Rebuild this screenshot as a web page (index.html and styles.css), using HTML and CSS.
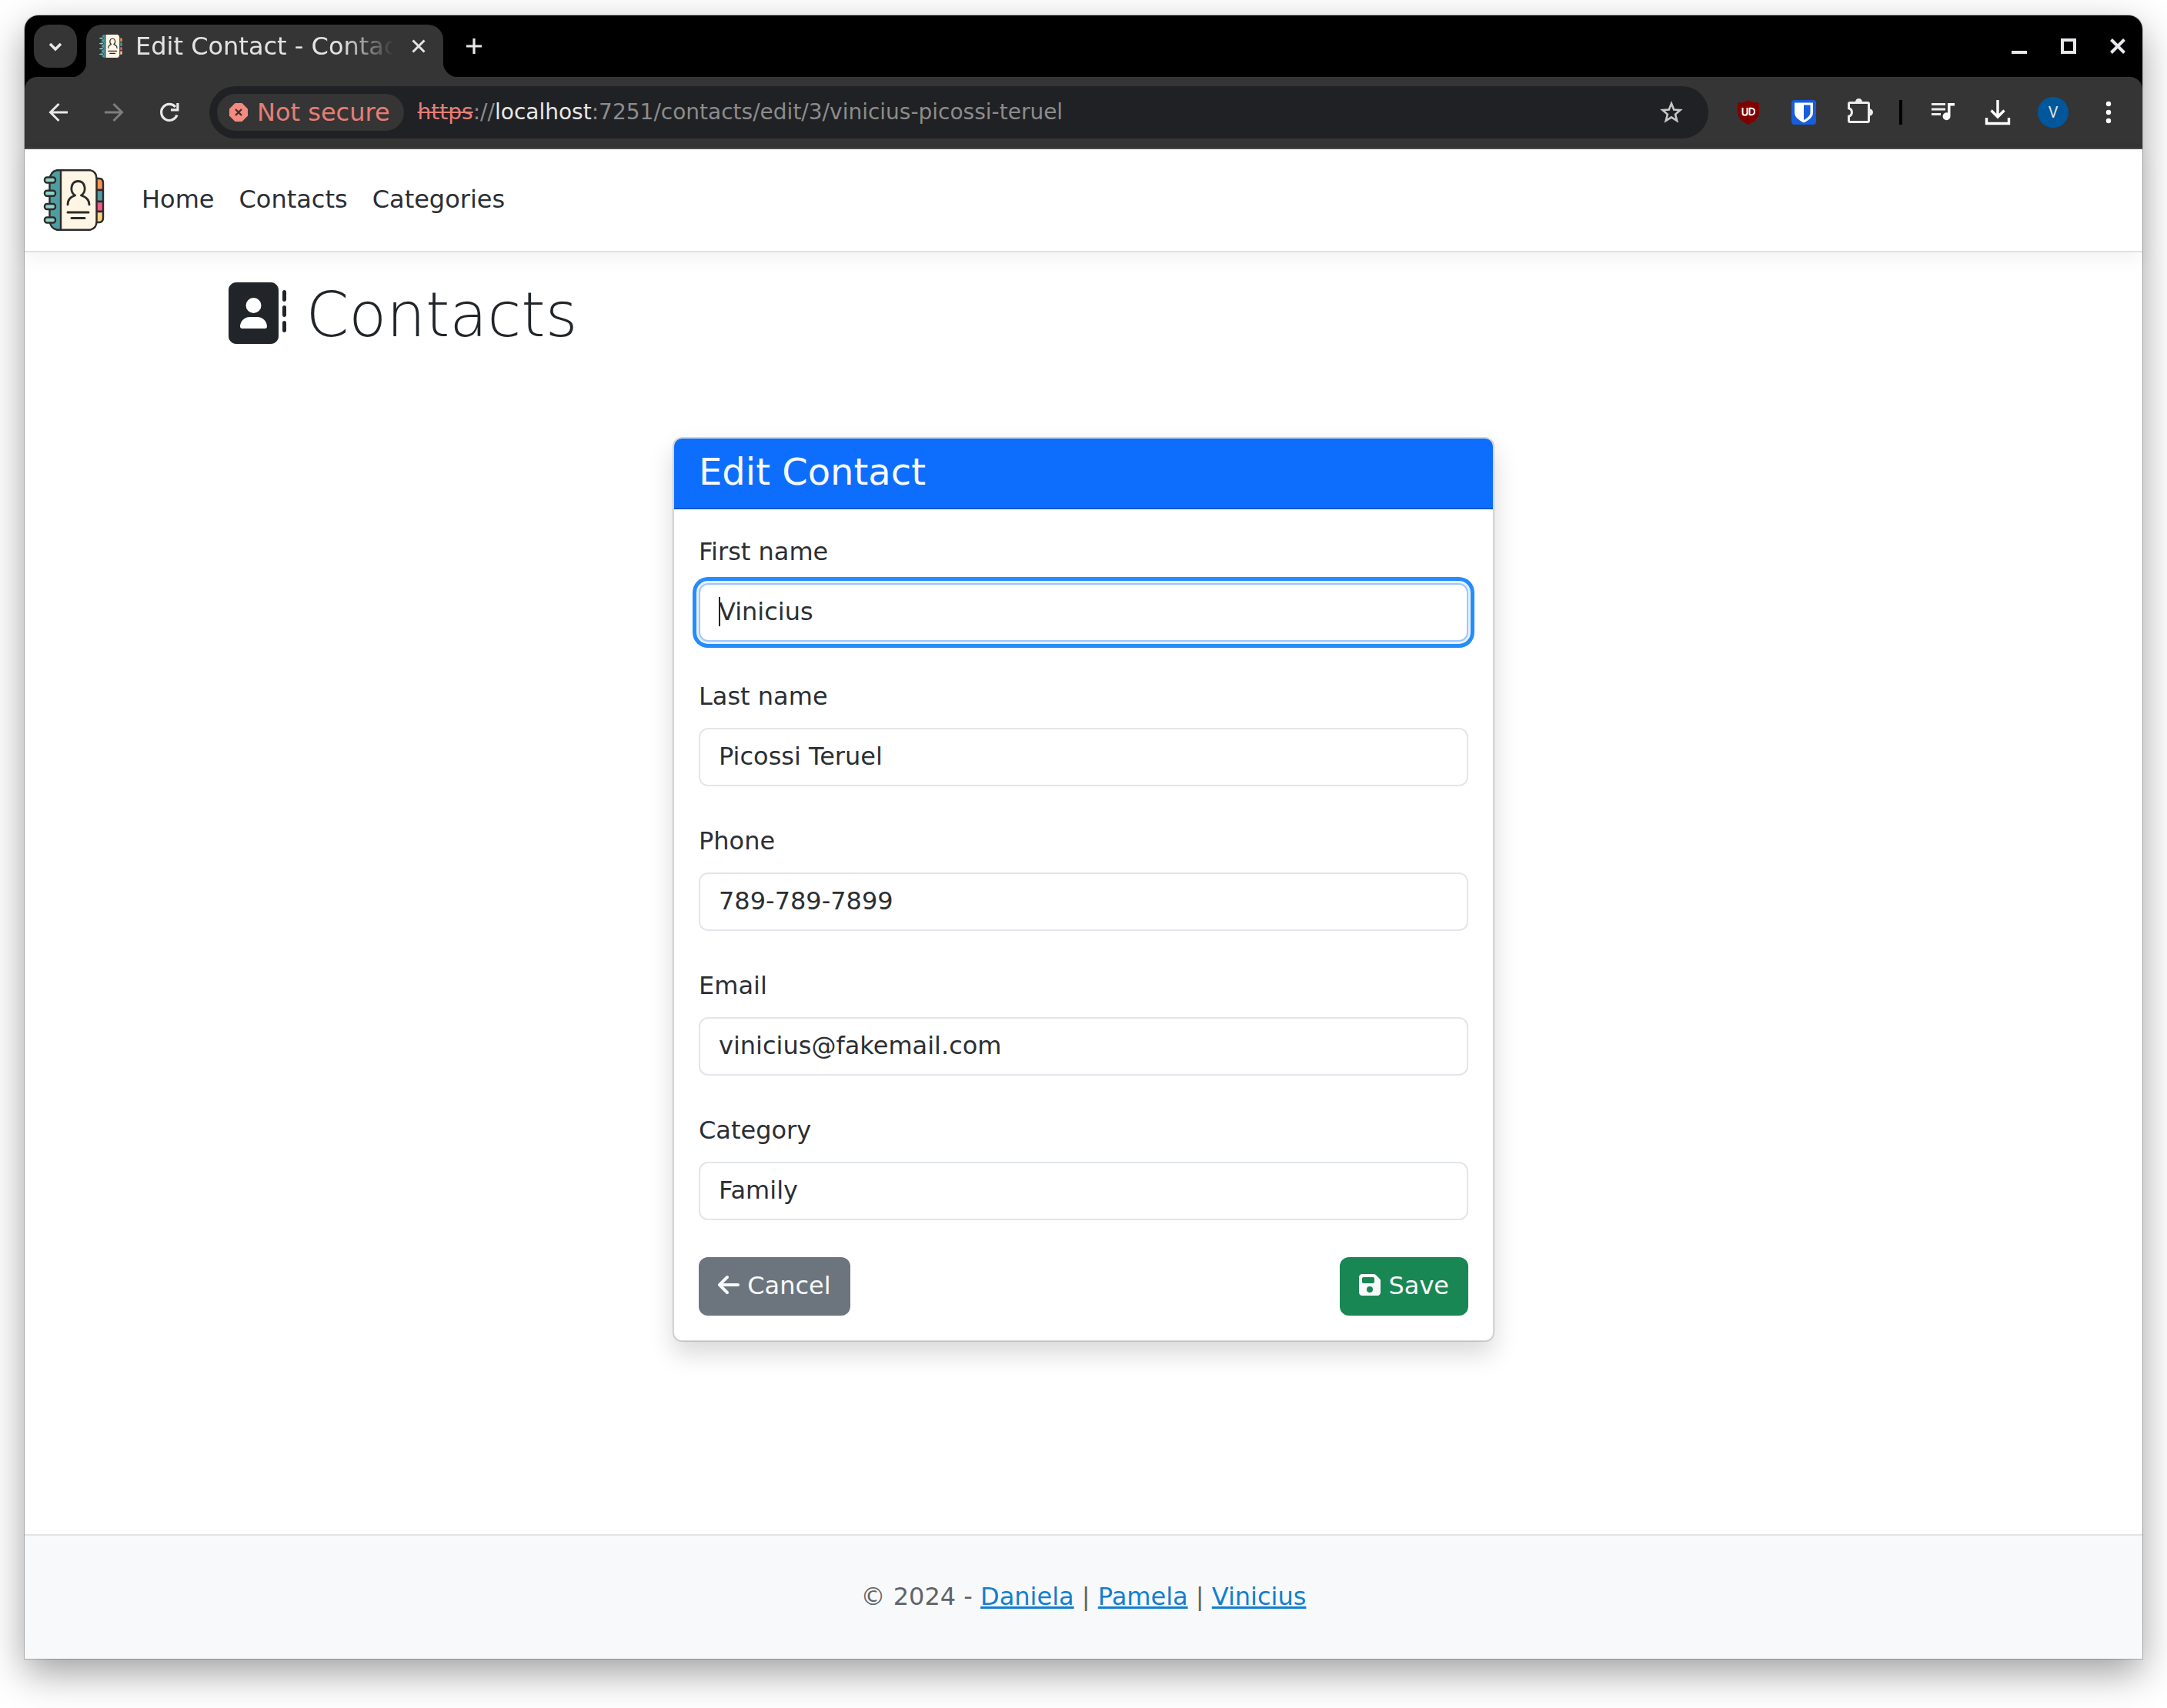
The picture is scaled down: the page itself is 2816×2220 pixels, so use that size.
FILE: index.html
```html
<!DOCTYPE html>
<html lang="en">
<head>
<meta charset="utf-8">
<title>Edit Contact - Contacts</title>
<link rel="stylesheet" href="styles.css">
</head>
<body>
<svg class="sprite" aria-hidden="true">
  <symbol id="logo" viewBox="0 0 80 80">
    <g stroke="#2b2b2b" stroke-width="2.4" stroke-linejoin="round" stroke-linecap="round">
      <path d="M69 12h4q5 0 5 6v9H69z" fill="#fb9552"/>
      <path d="M69 27h9v15H69z" fill="#4f9da1"/>
      <path d="M69 42h9v13H69z" fill="#f9598a"/>
      <path d="M69 55h9v8q0 6-5 6h-4z" fill="#fdd480"/>
      <path d="M24 1.200H18Q9 3 8.500 14V66Q9 77 18 78.800H24z" fill="#4f9da1"/>
      <path d="M23 1.200H61Q69.500 3 69.500 12V68Q69.500 77 61 78.800H23z" fill="#fff5e5"/>
      <path d="M32 46C32 40 35 36 41.500 34C34 29 36 15.500 45.500 15.500S57 29 49.500 34C56 36 60 40 60 46" fill="none" stroke-width="2.800"/>
      <path d="M32 56H59M37 63.500H54" fill="none" stroke-width="3"/>
      <g fill="#8ed3c7">
        <rect x="2" y="10.500" width="14" height="7" rx="3"/>
        <rect x="2" y="27.800" width="14" height="7" rx="3"/>
        <rect x="2" y="45" width="14" height="7" rx="3"/>
        <rect x="2" y="62.500" width="14" height="7" rx="3"/>
      </g>
    </g>
  </symbol>
</svg>

<div class="window">
  <header class="chrome">
    <div class="tabstrip">
      <button class="tab-search" type="button" aria-label="Search tabs">
        <svg viewBox="0 0 40 40"><path d="M13 17l7 7 7-7" fill="none" stroke="#e8e8e8" stroke-width="3.500"/></svg>
      </button>
      <div class="tab">
        <svg class="favicon"><use href="#logo"/></svg>
        <span class="tab-title">Edit Contact - Contacts</span>
        <button class="icon-btn" type="button" aria-label="Close tab">
          <svg viewBox="0 0 40 40"><path d="M12.500 12.500l15 15M27.500 12.500l-15 15" fill="none" stroke="#e3e3e3" stroke-width="3"/></svg>
        </button>
      </div>
      <button class="icon-btn new-tab" type="button" aria-label="New tab">
        <svg viewBox="0 0 40 40"><path d="M20 10v20M10 20h20" fill="none" stroke="#e8e8e8" stroke-width="3.200"/></svg>
      </button>
      <div class="window-buttons">
        <button class="icon-btn" type="button" aria-label="Minimize">
          <svg viewBox="0 0 40 40"><path d="M10 28h20" stroke="#e8e9ed" stroke-width="4"/></svg>
        </button>
        <button class="icon-btn" type="button" aria-label="Maximize">
          <svg viewBox="0 0 40 40"><path d="M12 12h16v16H12z" fill="none" stroke="#e8e9ed" stroke-width="4"/></svg>
        </button>
        <button class="icon-btn" type="button" aria-label="Close">
          <svg viewBox="0 0 40 40"><path d="M11.500 11.500l17 17M28.500 11.500l-17 17" stroke="#e8e9ed" stroke-width="4"/></svg>
        </button>
      </div>
    </div>

    <div class="toolbar">
      <button class="icon-btn" type="button" aria-label="Back">
        <svg viewBox="0 0 40 40"><path d="M32 20H10M20.500 9L9.500 20l11 11" fill="none" stroke="#e8e8e8" stroke-width="3"/></svg>
      </button>
      <button class="icon-btn" type="button" aria-label="Forward">
        <svg viewBox="0 0 40 40"><path d="M8 20h22M19.500 9l11 11-11 11" fill="none" stroke="#7e7e7e" stroke-width="3"/></svg>
      </button>
      <button class="icon-btn" type="button" aria-label="Reload">
        <svg viewBox="0 0 40 40"><path d="M30 23.500A10.500 10.500 0 1 1 28 13" fill="none" stroke="#e8e8e8" stroke-width="3.200"/><path d="M32.500 8v10.500H22v-3.200h7.300V8z" fill="#e8e8e8"/></svg>
      </button>
      <div class="omnibox">
        <button class="security" type="button">
          <svg viewBox="0 0 24 24"><path d="M7.500 0h9L24 7.500v9L16.500 24h-9L0 16.500v-9z" fill="#f28b82" stroke-linejoin="round"/><path d="M8 8l8 8M16 8l-8 8" stroke="#3a3232" stroke-width="2.400"/></svg>
          Not secure
        </button>
        <div class="url"><s>https</s>://<b>localhost</b>:7251/contacts/edit/3/vinicius-picossi-teruel</div>
        <button class="icon-btn" type="button" aria-label="Bookmark this tab">
          <svg viewBox="0 0 40 40"><path d="M20 8.500l3.200 8 8.300.6-6.400 5.500 2.100 8.400-7.200-4.600-7.200 4.600 2.100-8.400-6.400-5.500 8.300-.6z" fill="none" stroke="#c7c7c7" stroke-width="2.600"/></svg>
        </button>
      </div>
      <button class="icon-btn" type="button" aria-label="uBlock Origin">
        <svg viewBox="0 0 40 40"><path d="M20 4c3 3 9 3.500 14 3.500V18c0 9-5 14-14 18C11 32 6 27 6 18V7.500C11 7.500 17 7 20 4z" fill="#800000"/><path d="M12.500 14v6.500q0 3.300 3 3.300t3-3.300V14M21.500 14.800v8.200q6.500 1 6.500-4.100t-6.500-4.100z" fill="none" stroke="#fff" stroke-width="2"/></svg>
      </button>
      <button class="icon-btn" type="button" aria-label="Bitwarden">
        <svg viewBox="0 0 40 40"><rect x="4" y="4" width="32" height="32" rx="4" fill="#175ddc"/><path d="M8 7.500h24V20c0 6-5 10-12 13.500C13 30 8 26 8 20z" fill="#fff"/><path d="M20 10.500h8.500V20c0 4.200-3.500 7.200-8.500 10z" fill="#175ddc"/></svg>
      </button>
      <button class="icon-btn" type="button" aria-label="Extensions">
        <svg viewBox="0 0 40 40"><path d="M8 7.500h23a1.500 1.500 0 0 1 1.500 1.500V31a1.500 1.500 0 0 1-1.500 1.500H8A1.500 1.500 0 0 1 6.500 31v-5.800a5.400 5.400 0 0 0 0-10.400V9A1.500 1.500 0 0 1 8 7.500z" fill="none" stroke="#ececec" stroke-width="3"/><path d="M15 6.500a4.500 4.500 0 0 1 9 0zM33.500 15.500a4.500 4.500 0 0 1 0 9z" fill="#ececec"/></svg>
      </button>
      <span class="divider"></span>
      <button class="icon-btn" type="button" aria-label="Media controls">
        <svg viewBox="0 0 40 40"><path d="M6 9.500h18M6 16h18M6 22.500h12" stroke="#ececec" stroke-width="3"/><path d="M27 8h9v3.500h-5.500V25a5 5 0 1 1-3.500-4.500z" fill="#fff"/></svg>
      </button>
      <button class="icon-btn" type="button" aria-label="Downloads">
        <svg viewBox="0 0 40 40"><path d="M20 4v22M11.500 17.500l8.500 8.500 8.500-8.500M5.500 27v7.500h29V27" fill="none" stroke="#fff" stroke-width="3.400"/></svg>
      </button>
      <button class="avatar" type="button">V</button>
      <button class="icon-btn" type="button" aria-label="Menu">
        <svg viewBox="0 0 40 40"><g fill="#fff"><circle cx="20" cy="9" r="3.200"/><circle cx="20" cy="20" r="3.200"/><circle cx="20" cy="31" r="3.200"/></g></svg>
      </button>
    </div>
  </header>

  <nav class="navbar">
    <a class="brand" href="#" aria-label="Contacts home"><svg><use href="#logo"/></svg></a>
    <a class="nav-link" href="#">Home</a>
    <a class="nav-link" href="#">Contacts</a>
    <a class="nav-link" href="#">Categories</a>
  </nav>

  <main class="container">
    <h1 class="page-title"><svg viewBox="0 0 512 512"><path fill="currentColor" d="M96 0C60.700 0 32 28.700 32 64V448c0 35.300 28.700 64 64 64H384c35.300 0 64-28.700 64-64V64c0-35.300-28.700-64-64-64H96zM208 288h64c44.200 0 80 35.800 80 80c0 8.800-7.200 16-16 16H144c-8.800 0-16-7.200-16-16c0-44.200 35.800-80 80-80zm-32-96a64 64 0 1 1 128 0 64 64 0 1 1 -128 0zM512 80c0-8.800-7.200-16-16-16s-16 7.200-16 16v64c0 8.800 7.200 16 16 16s16-7.200 16-16V80zM496 192c-8.800 0-16 7.200-16 16v64c0 8.800 7.200 16 16 16s16-7.200 16-16V208c0-8.800-7.200-16-16-16zm16 144c0-8.800-7.200-16-16-16s-16 7.200-16 16v64c0 8.800 7.200 16 16 16s16-7.200 16-16V336z"/></svg> Contacts</h1>

    <section class="card">
      <h2 class="card-header">Edit Contact</h2>
      <form class="card-body">
        <div class="field">
          <label for="first">First name</label>
          <div class="control">
            <input class="focused" id="first" type="text" value="Vinicius">
            <span class="caret"></span>
          </div>
        </div>
        <div class="field">
          <label for="last">Last name</label>
          <input id="last" type="text" value="Picossi Teruel">
        </div>
        <div class="field">
          <label for="phone">Phone</label>
          <input id="phone" type="tel" value="789-789-7899">
        </div>
        <div class="field">
          <label for="email">Email</label>
          <input id="email" type="email" value="vinicius@fakemail.com">
        </div>
        <div class="field">
          <label for="category">Category</label>
          <select id="category"><option>Family</option></select>
        </div>
        <div class="actions">
          <button class="btn btn-secondary" type="button"><svg viewBox="0 0 448 512"><path fill="currentColor" d="M9.400 233.400c-12.500 12.500-12.500 32.800 0 45.300l160 160c12.500 12.500 32.800 12.500 45.300 0s12.500-32.800 0-45.300L109.200 288 416 288c17.700 0 32-14.300 32-32s-14.300-32-32-32l-306.700 0L214.600 118.600c12.500-12.500 12.500-32.800 0-45.300s-32.800-12.500-45.300 0l-160 160z"/></svg> Cancel</button>
          <button class="btn btn-success" type="button"><svg viewBox="0 0 448 512"><path fill="currentColor" d="M64 32C28.700 32 0 60.700 0 96V416c0 35.300 28.700 64 64 64H384c35.300 0 64-28.700 64-64V173.300c0-17-6.700-33.300-18.700-45.300L352 50.700C340 38.700 323.700 32 306.700 32H64zm0 96c0-17.700 14.300-32 32-32H288c17.700 0 32 14.300 32 32v64c0 17.700-14.300 32-32 32H96c-17.700 0-32-14.300-32-32V128zM224 288a64 64 0 1 1 0 128 64 64 0 1 1 0-128z"/></svg> Save</button>
        </div>
      </form>
    </section>
  </main>

  <footer class="footer">© 2024 - <a href="#">Daniela</a> | <a href="#">Pamela</a> | <a href="#">Vinicius</a></footer>
</div>
</body>
</html>
```
FILE: styles.css
```css
* {
  box-sizing: border-box;
}

body {
  display: flex;
  flex-direction: column;
  min-height: 100vh;
  margin: 0;
  padding: 20px 32px 64px;
  background: #fff;
  color: #2b2f33;
  font: 32px/48px "DejaVu Sans", sans-serif;
}

button,
input,
select {
  margin: 0;
  font: inherit;
}

svg {
  display: block;
}

.sprite {
  position: absolute;
  width: 0;
  height: 0;
}

.window {
  display: flex;
  flex: 1;
  flex-direction: column;
  background: #fff;
  border-radius: 18px 18px 0 0;
  box-shadow: 0 0 0 1px rgba(0, 0, 0, 0.2), 0 18px 50px rgba(0, 0, 0, 0.38);
}

/* Browser frame */

.chrome {
  background: #000;
  border-radius: 18px 18px 0 0;
}

.tabstrip {
  display: flex;
  align-items: center;
  height: 80px;
  padding: 0 12px;
}

.tab-search,
.icon-btn {
  display: flex;
  flex: none;
  align-items: center;
  justify-content: center;
  width: 40px;
  height: 40px;
  padding: 0;
  background: none;
  border: 0;
}

.icon-btn svg,
.tab-search svg {
  width: 40px;
  height: 40px;
}

.tab-search {
  width: 56px;
  height: 56px;
  background: #353535;
  border-radius: 20px;
}

.tab {
  position: relative;
  display: flex;
  align-items: center;
  align-self: flex-end;
  width: 464px;
  height: 68px;
  margin-left: 12px;
  padding: 0 12px 12px 16px;
  background: #353535;
  border-radius: 20px 20px 0 0;
}

.tab::before,
.tab::after {
  content: "";
  position: absolute;
  bottom: 0;
  width: 20px;
  height: 20px;
}

.tab::before {
  right: 100%;
  background: radial-gradient(circle at 0 0, transparent 20px, #353535 21px);
}

.tab::after {
  left: 100%;
  background: radial-gradient(circle at 100% 0, transparent 20px, #353535 21px);
}

.favicon {
  flex: none;
  width: 32px;
  height: 32px;
}

.tab-title {
  flex: 1;
  margin: 0 12px 0 16px;
  overflow: hidden;
  color: #e3e3e3;
  white-space: nowrap;
  mask-image: linear-gradient(to right, #000 80%, transparent);
}

.new-tab {
  margin-left: 20px;
}

.window-buttons {
  display: flex;
  gap: 24px;
  margin-left: auto;
}

.toolbar {
  display: flex;
  align-items: center;
  gap: 32px;
  height: 94px;
  padding: 0 24px;
  background: #353535;
  border-bottom: 2px solid #4a4a4a;
  border-radius: 16px 16px 0 0;
}

.omnibox {
  display: flex;
  flex: 1;
  align-items: center;
  height: 68px;
  padding: 0 28px 0 10px;
  background: #202124;
  border-radius: 34px;
}

.security {
  display: flex;
  align-items: center;
  gap: 12px;
  height: 48px;
  padding: 0 18px 0 16px;
  background: #353535;
  border: 0;
  border-radius: 24px;
  color: #e67e75;
}

.security svg {
  width: 24px;
  height: 24px;
}

.url {
  flex: 1;
  margin-left: 18px;
  color: #8c8c8c;
  font-size: 28px;
  white-space: nowrap;
}

.url s {
  color: #e67e75;
}

.url b {
  color: #e8e8e8;
  font-weight: normal;
}

.divider {
  width: 4px;
  height: 32px;
  background: #000;
}

.avatar {
  width: 40px;
  height: 40px;
  padding: 0;
  background: #01579b;
  border: 0;
  border-radius: 50%;
  color: #e3e3e3;
  font: 20px/40px Roboto, sans-serif;
}

/* Site navigation */

.navbar {
  display: flex;
  align-items: center;
  height: 134px;
  padding: 0 24px;
  border-bottom: 2px solid #dee2e6;
  box-shadow: 0 8px 24px rgba(0, 0, 0, 0.05);
}

.brand {
  margin-right: 32px;
}

.brand svg {
  width: 80px;
  height: 80px;
}

.nav-link {
  padding: 14px 16px 16px;
  color: inherit;
  text-decoration: none;
}

/* Page */

.container {
  flex: 1;
  width: 100%;
  max-width: 2280px;
  margin: 0 auto;
  padding: 34px 24px;
}

.page-title {
  margin: 0 0 110px;
  color: #212529;
  font-family: "DejaVu Sans Light", "DejaVu Sans", sans-serif;
  font-size: 80px;
  font-weight: 200;
  line-height: 96px;
}

.page-title svg {
  display: inline-block;
  width: 80px;
  height: 80px;
  vertical-align: -10px;
}

.card {
  max-width: 1068px;
  margin: 0 auto;
  background: #fff;
  background-clip: padding-box;
  border: 2px solid rgba(0, 0, 0, 0.15);
  border-radius: 12px;
  box-shadow: 0 16px 32px rgba(0, 0, 0, 0.15);
}

.card-header {
  margin: 0;
  padding: 14px 32px 18px;
  background: #0d6efd;
  border-bottom: 2px solid #0b5bd1;
  border-radius: 10px 10px 0 0;
  color: #f8f9fa;
  font-size: 48px;
  font-weight: normal;
  line-height: 58px;
}

.card-body {
  padding: 31px 32px 32px;
}

.field {
  margin-bottom: 47px;
}

.field:last-of-type,
.actions {
  margin-bottom: 0;
}

label {
  display: block;
  margin-bottom: 17px;
}

input,
select {
  display: block;
  width: 100%;
  height: 76px;
  padding: 11px 24px 13px;
  appearance: none;
  background: #fff;
  border: 2px solid #e2e6ea;
  border-radius: 12px;
  color: #2b2f33;
}

.focused {
  border-color: #9ec5fe;
  box-shadow: 0 0 0 3px #e6f1ff, 0 0 0 8px #258cfb;
}

.control {
  position: relative;
}

.caret {
  position: absolute;
  top: 18px;
  left: 26px;
  width: 2px;
  height: 38px;
  background: #212529;
}

.actions {
  display: flex;
  justify-content: space-between;
  padding-top: 1px;
}

.btn {
  height: 76px;
  padding: 0 25px 2px;
  border: 0;
  border-radius: 12px;
  color: #f8f9fa;
}

.btn svg {
  display: inline-block;
  width: 28px;
  height: 32px;
  vertical-align: -4px;
}

.btn-secondary {
  background: #6c757d;
}

.btn-success {
  background: #198754;
}

.footer {
  padding-bottom: 2px;
  background: #f8f9fb;
  border-top: 2px solid #e2e4e7;
  color: #616467;
  line-height: 158px;
  text-align: center;
}

.footer a {
  color: #127fd0;
}
```
